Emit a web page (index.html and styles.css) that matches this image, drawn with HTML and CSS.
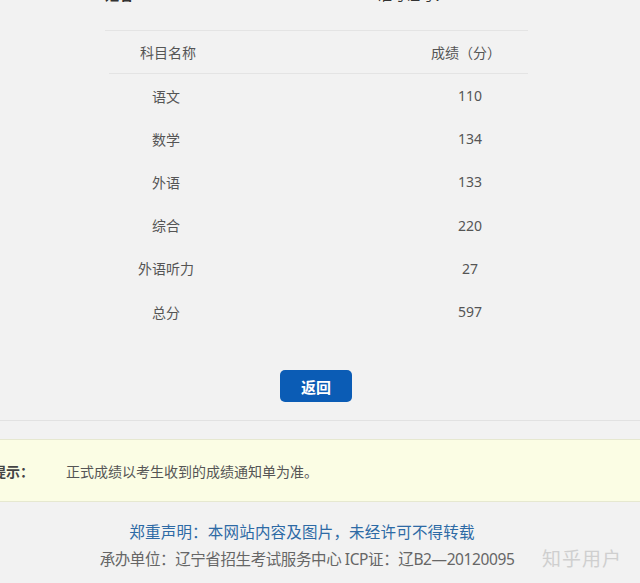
FILE: index.html
```html
<!DOCTYPE html>
<html lang="zh-CN">
<head>
    <meta charset="UTF-8">
    <meta name="viewport" content="width=device-width, initial-scale=1.0">
    <title>成绩查询结果</title>
    <link rel="stylesheet" href="styles.css">
</head>
<body>
    <div class="result">
        <div class="info-row">
            <span class="info-name">姓名</span>
            <span class="info-id">准考证号：2019210001</span>
        </div>

        <div class="score-table">
            <div class="score-row score-head">
                <div class="cell">科目名称</div>
                <div class="cell"></div>
                <div class="cell">成绩（分）</div>
            </div>
            <div class="score-row">
                <div class="cell">语文</div>
                <div class="cell"></div>
                <div class="cell num">110</div>
            </div>
            <div class="score-row">
                <div class="cell">数学</div>
                <div class="cell"></div>
                <div class="cell num">134</div>
            </div>
            <div class="score-row">
                <div class="cell">外语</div>
                <div class="cell"></div>
                <div class="cell num">133</div>
            </div>
            <div class="score-row">
                <div class="cell">综合</div>
                <div class="cell"></div>
                <div class="cell num">220</div>
            </div>
            <div class="score-row">
                <div class="cell">外语听力</div>
                <div class="cell"></div>
                <div class="cell num">27</div>
            </div>
            <div class="score-row">
                <div class="cell">总分</div>
                <div class="cell"></div>
                <div class="cell num">597</div>
            </div>
        </div>

        <div class="actions">
            <button class="btn-back" onclick="history.back()">返回</button>
        </div>
    </div>

    <div class="tip-box">
        <span class="tip-label">提示：</span>
        <span class="tip-text">正式成绩以考生收到的成绩通知单为准。</span>
    </div>

    <div class="footer">
        <p class="footer-note">郑重声明：本网站内容及图片，未经许可不得转载</p>
        <p class="footer-org">承办单位：辽宁省招生考试服务中心 ICP证：辽B2—20120095</p>
        <span class="watermark">知乎用户</span>
    </div>
</body>
</html>
```

FILE: styles.css
```css
body {
    font-family: 'Noto Sans', 'Noto Sans CJK SC', sans-serif;
    background: #f2f2f2;
    margin: 0;
    padding: 0;
    color: #555;
    overflow: hidden;
}

.result {
    border-bottom: 1px solid #e2e2e2;
    padding-bottom: 18px;
}

.info-row {
    width: 423px;
    margin: -15px 0 0 105px;
    height: 45px;
    display: flex;
    justify-content: space-between;
    font-size: 14px;
    line-height: 20px;
    color: #333;
}

.info-name {
    font-weight: bold;
}

.score-table {
    width: 423px;
    margin-left: 105px;
    border-top: 1px solid #e4e4e4;
}

.score-row {
    display: grid;
    grid-template-columns: 122px 1fr 124px;
    height: 43.2px;
    align-items: center;
    font-size: 14px;
}

.score-head {
    height: 42px;
    margin-left: 4px;
    border-bottom: 1px solid #e4e4e4;
}

.score-head .cell:first-child {
    margin-left: -4px;
}

.cell {
    text-align: center;
}

.num {
    padding-left: 8px;
}

.actions {
    display: flex;
    justify-content: center;
    padding-right: 8px;
    margin-top: 37px;
}

.btn-back {
    width: 72px;
    height: 32px;
    border: none;
    border-radius: 5px;
    background: #0b5cb5;
    color: #fff;
    font-family: inherit;
    font-size: 15px;
    font-weight: bold;
    cursor: pointer;
}

.tip-box {
    margin-top: 18px;
    height: 61px;
    background: #fbfde4;
    border-top: 1px solid #e6e8d0;
    border-bottom: 1px solid #e6e8d0;
    display: flex;
    align-items: center;
    font-size: 14px;
}

.tip-label {
    margin-left: -8px;
    width: 74px;
    font-weight: bold;
    color: #444;
}

.tip-text {
    color: #555;
}

.footer {
    position: relative;
    padding-top: 17px;
    font-size: 15.5px;
}

.footer p {
    margin: 0;
    text-align: center;
    line-height: 27px;
}

.footer-note {
    color: #2d6aa5;
    padding-right: 36px;
    letter-spacing: 0.2px;
}

.footer-org {
    color: #666;
    padding-right: 26px;
    letter-spacing: -0.4px;
}

.watermark {
    position: absolute;
    right: 18px;
    top: 44px;
    font-size: 19px;
    line-height: 27px;
    color: #cfcfcf;
    letter-spacing: 1px;
}
```
